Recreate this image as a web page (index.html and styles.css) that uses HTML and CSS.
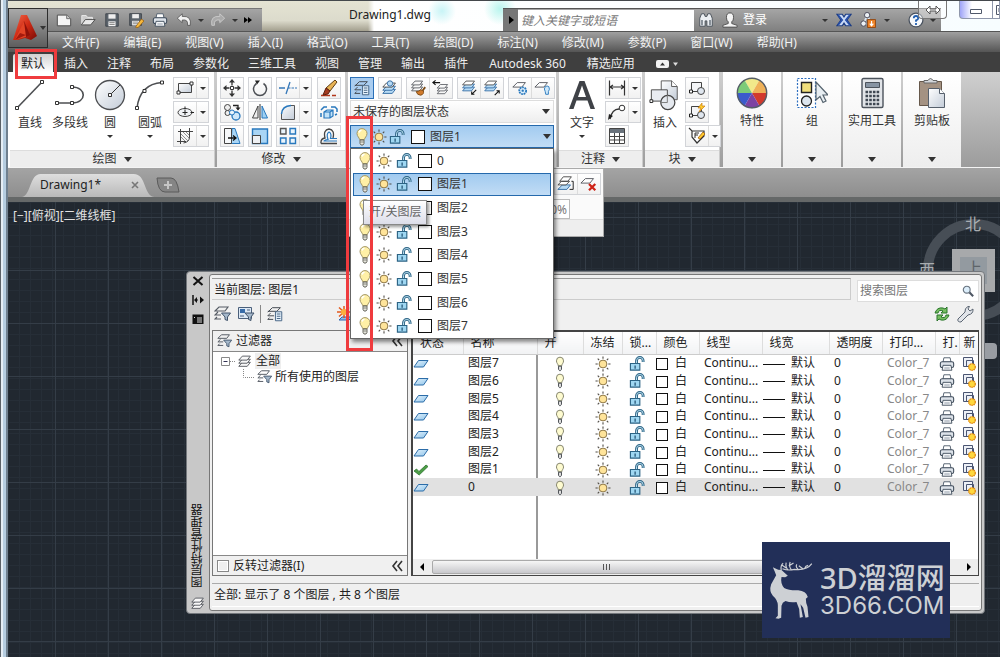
FILE: index.html
```html
<!DOCTYPE html>
<html lang="zh-CN">
<head>
<meta charset="utf-8">
<title>Drawing1.dwg</title>
<link rel="stylesheet" href="styles.css">
</head>
<body>
<svg class="sprites" aria-hidden="true">
  <defs>
    <linearGradient id="g-paper" x1="0" y1="0" x2="1" y2="1"><stop offset="0" stop-color="#fff"/><stop offset="1" stop-color="#c3ccd8"/></linearGradient>
    <linearGradient id="g-sky" x1="0" y1="0" x2="1" y2="1"><stop offset="0" stop-color="#e3f2fc"/><stop offset="1" stop-color="#8fc4ea"/></linearGradient>
    <linearGradient id="g-red" x1="0" y1="0" x2="1" y2="1"><stop offset="0" stop-color="#f4694a"/><stop offset=".5" stop-color="#cf2a14"/><stop offset="1" stop-color="#7a0c06"/></linearGradient>
    <linearGradient id="g-tab" x1="0" y1="0" x2="0" y2="1"><stop offset="0" stop-color="#dedede"/><stop offset="1" stop-color="#b9b9b9"/></linearGradient>
  </defs>
  <symbol id="bulb" viewBox="0 0 14 18"><path d="M4.500 11.500C4.500 9.500 2 8.500 2 5.500a5 4.900 0 0 1 10 0c0 3-2.500 4-2.500 6z" fill="#fff0a6" stroke="#a39767"/><path d="M4 4.500q.5-2 2.500-2.200" stroke="#fff" stroke-width="1.500" fill="none"/><path d="M5 12h4v3.500L8 17H6l-1-1.500z" fill="#e4e4dc" stroke="#6b6b62"/><path d="M5 14h4" stroke="#8a8a80"/></symbol>
  <symbol id="bulb-s" viewBox="0 0 14 18"><path d="M5 11C5 9 3 8 3 5.500a4 4.200 0 0 1 8 0C11 8 9 9 9 11z" fill="#fefbd0" stroke="#77775f"/><path d="M5.300 11.500h3.400V15L7.500 16.500h-1L5.300 15z" fill="#ddd" stroke="#3c4046"/></symbol>
  <symbol id="sun" viewBox="0 0 16 16"><g stroke="#4f4b45" stroke-width="1.100"><path d="M8 .5v2.200M8 13.300v2.200M.5 8h2.200M13.300 8h2.200M2.700 2.700l1.500 1.500M11.800 11.800l1.500 1.500M2.700 13.300l1.500-1.500M11.800 4.200l1.500-1.500"/></g><circle cx="8" cy="8" r="3.900" fill="#ffe49a" stroke="#8d7748"/></symbol>
  <symbol id="lock" viewBox="0 0 17 16"><path d="M8 7V4.500a3.500 3.500 0 0 1 7 0V6" fill="none" stroke="#2c6384" stroke-width="3"/><path d="M8 7V4.500a3.500 3.500 0 0 1 7 0v1.200" fill="none" stroke="#bfe4f5" stroke-width="1"/><path d="M1.500 7.500h10v7h-10z" fill="#9fd7f2" stroke="#2c6384" stroke-width="1.200"/><path d="M6.500 9.500V13" stroke="#1f4f70" stroke-width="1.300"/></symbol>
  <symbol id="plane" viewBox="0 0 16 10"><path d="M5.500 1.500H15L10.500 8H1z" fill="url(#g-sky)" stroke="#2b6ca8"/></symbol>
  <symbol id="stack" viewBox="0 0 18 18"><g fill="#f8f8f8" stroke="#50545a" stroke-width="1"><path d="M2 15l4-4.500h9L11.500 15z"/><path d="M2 11.500L6 7h9l-3.500 4.500z"/><path d="M2 8l4-4.500h9L11.500 8z"/></g></symbol>
  <symbol id="stack-blue" viewBox="0 0 18 18"><g fill="#b7dbf5" stroke="#2d67a0"><path d="M2 15l4-4.500h10L12.500 15z"/><path d="M2 11.500L6 7h10l-3.500 4.500z"/></g><path d="M2 8l4-4.500h10L12.500 8z" fill="#fff" stroke="#444"/></symbol>
  <symbol id="layer-prop" viewBox="0 0 20 18"><g fill="none" stroke="#444a52" stroke-width="1.100"><path d="M8 15H2l2-2M9 11H2l3-3M2 7l5-5h9l-4 4H2"/></g><path d="M10.500 6.500h7v10h-7z" fill="#e4f0fa" stroke="#3c5b7d"/><path d="M12 9h4M12 11.500h4M12 14h4" stroke="#3c5b7d"/></symbol>
  <symbol id="layer-filter" viewBox="0 0 18 16"><g fill="none" stroke="#555b64" stroke-width="1.100"><path d="M7 13H1l2-2M7 9H1l3-3M1 5l4-4h9l-3 4z"/></g><path d="M7.500 7h9l-3 4v3.500l-2.500-1V11z" fill="#a6b9cc" stroke="#40536a"/></symbol>
  <symbol id="layer-cur" viewBox="0 0 20 18"><use href="#stack-blue" width="18" height="18"/><circle cx="10" cy="4" r="3" fill="#b7dbf5" stroke="#2d67a0"/></symbol>
  <symbol id="layer-match" viewBox="0 0 20 18"><g transform="translate(1 -2)"><use href="#stack" width="17" height="17"/></g><path d="M18 8l-3 4" stroke="#7a4a16" stroke-width="2"/><path d="M8 13q1 4 5 4 4-1 3-5l-3-1q-2 2-5 2z" fill="#d07a2c" stroke="#7a4a16"/></symbol>
  <symbol id="layer-prev" viewBox="0 0 20 18"><g transform="translate(4 2)"><use href="#stack" width="16" height="16"/></g><path d="M1 3h8M4 .5L1 3l3 2.500" fill="none" stroke="#111" stroke-width="1.300"/></symbol>
  <symbol id="layer-iso" viewBox="0 0 20 18"><g transform="translate(1 -2)"><use href="#stack-blue" width="17" height="17"/></g><path d="M18 11l-5 5m0-3v3h3" fill="none" stroke="#111" stroke-width="1.200"/></symbol>
  <symbol id="layer-uniso" viewBox="0 0 20 18"><g transform="translate(0 -2)"><use href="#stack-blue" width="17" height="17"/></g><path d="M13 17l5-5m-3 0h3v3" fill="none" stroke="#111" stroke-width="1.200"/></symbol>
  <symbol id="layer-frz" viewBox="0 0 20 18"><path d="M2 8l5-5h9l-4 5z" fill="#fff" stroke="#50545a"/><circle cx="13" cy="12" r="3.800" fill="#dff0fc" stroke="#2878bd" stroke-width="2" stroke-dasharray="2 .8"/><circle cx="13" cy="12" r="1.300" fill="#2878bd"/></symbol>
  <symbol id="layer-off" viewBox="0 0 20 18"><path d="M1 8l5-5h9l-4 5z" fill="#fff" stroke="#50545a"/><path d="M12.500 13q-2-3 0-5.500 2-1.500 4 0 1.500 3-.5 5.500v3h-3z" fill="#cde8fa" stroke="#2878bd"/></symbol>
  <symbol id="layer-del" viewBox="0 0 20 18"><path d="M1 8l5-5h9l-4 5z" fill="#fff" stroke="#50545a"/><path d="M10 9l7 7M17 9l-7 7" stroke="#cf2418" stroke-width="2.500"/></symbol>
  <symbol id="layer-merge" viewBox="0 0 20 18"><path d="M1 15l5-5h9l-4 5z" fill="#b7dbf5" stroke="#2d67a0"/><path d="M1 10l4-4h9l-4 4zM3 6l4-5h9l-4 5z" fill="#fff" stroke="#444"/><path d="M16 6h2v9h-4" fill="none" stroke="#111"/></symbol>
  <symbol id="printer" viewBox="0 0 18 16"><path d="M4.500 6l1-5h7l1 5z" fill="#fff" stroke="#4b5868"/><rect x="1.500" y="5.500" width="15" height="6.500" rx="2" fill="#dce2e9" stroke="#3d4a59" stroke-width="1.200"/><path d="M4.500 9.500h9l1 5.500h-11z" fill="#f4f6f8" stroke="#3d4a59"/><path d="M6 12.500h6" stroke="#8793a1"/></symbol>
  <symbol id="vp" viewBox="0 0 14 16"><path d="M1.500 1.500h9v9h-9zM4.500 4.500h7v6h-7z" fill="#edf0f6" stroke="#4a5572"/><circle cx="10" cy="11" r="3.300" fill="#ffd83e" stroke="#e28a12" stroke-width="1.300" stroke-dasharray="1.500 .6"/></symbol>
  <symbol id="check" viewBox="0 0 16 12"><path d="M1 7l2.500-2L6 7.500 13 1l2 1.500L6.200 11z" fill="#4d9e46" stroke="#2c7430" stroke-width=".8"/></symbol>
  <symbol id="line" viewBox="0 0 32 32"><path d="M3 29L28 3" stroke="#4d4f52" stroke-width="1.600"/><path d="M1.500 27.500h3v3h-3zM26.500 1.500h3v3h-3z" fill="#fff" stroke="#333"/></symbol>
  <symbol id="pline" viewBox="0 0 32 32"><path d="M3 24h15c15 0 15-16 0-16" fill="none" stroke="#4d4f52" stroke-width="1.600"/><path d="M1.500 22.500h3v3h-3zM16.500 22.500h3v3h-3zM16.500 6.500h3v3h-3z" fill="#fff" stroke="#333"/></symbol>
  <symbol id="circle" viewBox="0 0 32 32"><circle cx="16" cy="16" r="14.500" fill="url(#g-paper)" stroke="#4d4f52" stroke-width="1.300"/><path d="M17 15L26 6" stroke="#333"/><path d="M14.500 14.500h3v3h-3z" fill="#fff" stroke="#333"/></symbol>
  <symbol id="arc" viewBox="0 0 32 32"><path d="M3 29Q6 5 28 3.500" fill="none" stroke="#4d4f52" stroke-width="1.600"/><path d="M1.500 27.500h3v3h-3zM26.500 2h3v3h-3zM9 10.500h3v3H9z" fill="#fff" stroke="#333"/></symbol>
  <symbol id="rect" viewBox="0 0 18 18"><path d="M2.500 4.500h13v9h-13z" fill="url(#g-paper)" stroke="#444"/><path d="M1 12h3v3H1zM14 3h3v3h-3z" fill="#fff" stroke="#333"/></symbol>
  <symbol id="ellipse" viewBox="0 0 18 18"><ellipse cx="9" cy="9.500" rx="7" ry="4" fill="#f1f3f6" stroke="#444"/><path d="M9 7v5M6.500 9.500h5M9 3.500v3M14.500 9.500H18" stroke="#222"/></symbol>
  <symbol id="hatch" viewBox="0 0 18 18"><path d="M4.500 2v15M2 4.500h15M13.500 1v9q0 5-6 6M1 14.500h9" fill="none" stroke="#444"/><path d="M5 7l7 7M5 10l4 4M7 5l6 6M10 5l3 3" stroke="#777" stroke-width=".8"/></symbol>
  <symbol id="move" viewBox="0 0 18 18"><path d="M9 2.500v4M9 11.500v4M2.500 9h4M11.500 9h4" stroke="#333" stroke-width="1.300"/><path d="M9 0l3 3.500H6zM9 18l3-3.500H6zM0 9l3.500-3v6zM18 9l-3.500-3v6z" fill="#333"/><path d="M7.500 7.500h3v3h-3z" fill="#fff" stroke="#333"/></symbol>
  <symbol id="rotate" viewBox="0 0 18 18"><path d="M5.500 4.500a6.500 6.500 0 1 0 7 0" fill="none" stroke="#4c4f54" stroke-width="1.500"/><path d="M4 1.500h5l-3 4z" fill="#222"/></symbol>
  <symbol id="trim" viewBox="0 0 18 18"><path d="M0 9h6M11 3L7 15" stroke="#3477b8" stroke-width="1.300"/><path d="M9 9h9" stroke="#3477b8" stroke-dasharray="2.500 1"/></symbol>
  <symbol id="erase" viewBox="0 0 18 18"><path d="M1 16.500h9M12 16.500h4" stroke="#b2361a" stroke-width="1.500"/><path d="M15 1l2 2-7 9-4-3z" fill="#e8b354" stroke="#604014"/><path d="M6 9l4 3-2 3-5 1z" fill="#a43b20" stroke="#5b1d0e"/></symbol>
  <symbol id="copy" viewBox="0 0 18 18"><circle cx="4.500" cy="4.500" r="3" fill="#eee" stroke="#444"/><circle cx="4.500" cy="10" r="2.500" fill="#eee" stroke="#444"/><circle cx="13" cy="13" r="4" fill="#cfe8fa" stroke="#2878bd" stroke-width="1.300"/><circle cx="9" cy="9.500" r="2.500" fill="#eaf5fd" stroke="#2878bd"/><path d="M10 2.500h5v4" fill="none" stroke="#222" stroke-width="1.300"/><path d="M12.500 4.500h5l-2.500 3z" fill="#222"/></symbol>
  <symbol id="mirror" viewBox="0 0 18 18"><path d="M7 3v12H1.500z" fill="#eee" stroke="#444"/><path d="M11 3v12h5.500z" fill="#9fd0f3" stroke="#2878bd"/><path d="M9 1v16" stroke="#333"/></symbol>
  <symbol id="fillet" viewBox="0 0 18 18"><path d="M2 16V11Q3 3 12 2h4v14z" fill="url(#g-paper)"/><path d="M2.500 11Q3 3 12 2.500" fill="none" stroke="#2878bd" stroke-width="1.500"/><path d="M2.500 11v5.500h13v-14H12" fill="none" stroke="#555"/></symbol>
  <symbol id="explode" viewBox="0 0 18 18"><path d="M4 9l3-2h6v6l-3 2H4zM4 9h6v6M10 9l3-2" fill="#c2e2f8" stroke="#2878bd" stroke-width="1.200"/><path d="M1 7l3-3h3M11 4h4l2 2v3M1 10v4M15 12l2-1" fill="none" stroke="#2878bd" stroke-width="1.500"/></symbol>
  <symbol id="stretch" viewBox="0 0 18 18"><path d="M9 1.500h3l5 15H8z" fill="#a9d5f5" stroke="#2878bd"/><path d="M1.500 1.500h7v15h-7z" fill="#f6f8fa" stroke="#444"/><path d="M5 11h8M10 8.500l3 2.500-3 2.500" fill="none" stroke="#111" stroke-width="1.300"/></symbol>
  <symbol id="scale" viewBox="0 0 18 18"><path d="M1.500 2h15v14.500h-15z" fill="#a9d5f5" stroke="#2878bd" stroke-width="1.400"/><path d="M1.500 8.500h8v8h-8z" fill="#eef0f3" stroke="#444"/></symbol>
  <symbol id="array" viewBox="0 0 18 18"><g fill="#e9f4fc" stroke="#2878bd" stroke-width="1.400"><path d="M11 1.500h5.500V7H11zM1.500 11H7v5.500H1.500zM11 11h5.500v5.500H11z"/><path d="M1.500 1.500H7V7H1.500z" stroke="#555"/></g></symbol>
  <symbol id="offset" viewBox="0 0 18 18"><path d="M1 16.500h16M1 16.500q-.5-5 4-5.500-2-8 4-9 6 1 4 9" fill="none" stroke="#444" stroke-width="1.300"/><path d="M3.500 14H17M4 14q1-1.500 4-1.500-2-6 1-7.500 3 1.500 1.500 6.500H17" fill="none" stroke="#2878bd" stroke-width="1.200"/></symbol>
  <symbol id="dim" viewBox="0 0 18 18"><path d="M1.500 1.500v15M16.500 1.500v15M2 8h14M5 6L2 8l3 2M13 6l3 2-3 2" fill="none" stroke="#333" stroke-width="1.200"/></symbol>
  <symbol id="leader" viewBox="0 0 18 18"><path d="M2 16Q4 6 11 6" fill="none" stroke="#333" stroke-width="1.300"/><circle cx="14" cy="5" r="2.800" fill="#fff" stroke="#333"/><path d="M0 17l1-6 4 2z" fill="#222"/></symbol>
  <symbol id="grid" viewBox="0 0 18 18"><path d="M1.500 1.500h15v15h-15z" fill="#fff" stroke="#444"/><path d="M2 2h14v4H2z" fill="#69727c"/><path d="M1.500 9.500h15M1.500 13h15M6.500 6v10.500M11.500 6v10.500" stroke="#444"/></symbol>
  <symbol id="insert" viewBox="0 0 34 34"><path d="M13 2h11l6 6v14H13z" fill="url(#g-paper)" stroke="#555"/><path d="M24 2v6h6" fill="#fff" stroke="#555"/><path d="M2.500 11.500h17v12h-17z" fill="#e9ecf1" stroke="#444"/><circle cx="20" cy="25" r="7.500" fill="#e5e9ef" stroke="#444" stroke-width="1.300"/><path d="M19.500 17v8H12" fill="none" stroke="#777"/><path d="M1 22h3v3H1z" fill="#fff" stroke="#222"/></symbol>
  <symbol id="blk" viewBox="0 0 18 18"><path d="M3.500 3.500h10v9h-10z" fill="#f4f5f7" stroke="#444"/><circle cx="13" cy="12" r="3.500" fill="#dfe6ef" stroke="#444"/><path d="M1.500 11h3v3h-3z" fill="#fff" stroke="#222"/></symbol>
  <symbol id="blk-edit" viewBox="0 0 18 18"><use href="#blk" width="18" height="18"/><path d="M14 0l-4 5h3l-2 4 6-6h-3z" fill="#ffcb2e" stroke="#c77b0d" stroke-width=".7"/></symbol>
  <symbol id="blk-attr" viewBox="0 0 18 18"><path d="M1 1l3 3h12v5l-7 7-5-6V4" fill="#fff" stroke="#333" stroke-width="1.200"/><path d="M7 11V6h4M7 8h3" fill="none" stroke="#333"/><path d="M10 11l5-6 2 2-5 5z" fill="#ffcb2e" stroke="#a35f0b" stroke-width=".8"/></symbol>
  <symbol id="wheel" viewBox="-16 -16 32 32"><path d="M0 0L-7.500-13A15 15 0 0 1 7.500-13z" fill="#f1e98a"/><path d="M0 0L7.500-13A15 15 0 0 1 15 0z" fill="#efb158"/><path d="M0 0H15A15 15 0 0 1 7.500 13z" fill="#d2392d"/><path d="M0 0L7.500 13A15 15 0 0 1-7.500 13z" fill="#7d42a2"/><path d="M0 0L-7.500 13A15 15 0 0 1-15 0z" fill="#3b5bcb"/><path d="M0 0H-15A15 15 0 0 1-7.500-13z" fill="#7ccb78"/><circle r="14.700" fill="none" stroke="#555d68" stroke-width="1.400"/></symbol>
  <symbol id="group" viewBox="0 0 32 32"><path d="M1.500 1.500h18v29h-18z" fill="#fff" stroke="#2d6fc0" stroke-width="1.200" stroke-dasharray="2 1.500"/><path d="M5.500 5.500h10v10h-10z" fill="#f1df7c" stroke="#222" stroke-width="1.400"/><circle cx="10.500" cy="24" r="5" fill="#dde6ef" stroke="#222" stroke-width="1.300"/><path d="M20 5v18l4-3.500 3 6 3-1.500-3-6h5z" fill="#e8eef2" stroke="#55636e" stroke-width="1.200"/></symbol>
  <symbol id="calc" viewBox="0 0 32 32"><rect x="6" y="1.500" width="21" height="29" rx="1.500" fill="#e2e5e9" stroke="#4c535c" stroke-width="1.400"/><path d="M9.500 5.500h14v5h-14z" fill="#8794a3" stroke="#4c535c"/><path d="M9.500 15h14M9.500 19h14M9.500 23h14M9.500 27h14" stroke="#3e4752" stroke-width="2.400" stroke-dasharray="2.600 1.100"/></symbol>
  <symbol id="clip" viewBox="0 0 32 32"><path d="M3.500 4.500h22v24h-22z" fill="#a49282" stroke="#66584b"/><path d="M8 6V3.500h4q2.500-4 5 0h4V6z" fill="#d3d6da" stroke="#666"/><path d="M12.500 11.500h11l5 5v14h-16z" fill="url(#g-paper)" stroke="#56606c"/><path d="M23.500 11.500v5h5" fill="#fff" stroke="#56606c"/></symbol>
  <symbol id="new" viewBox="0 0 18 18"><path d="M1.500 3.500h11l4 4v8h-15z" fill="#f4f4f4" stroke="#444"/><path d="M12 3.500v4h4.500" fill="#ccc" stroke="#666"/></symbol>
  <symbol id="open" viewBox="0 0 18 18"><path d="M2 14V4h5l1.500 2H14v3" fill="#ccc" stroke="#eee"/><path d="M1.500 14.500L6 8.500h11L12 14.500z" fill="#e8e8e8" stroke="#444"/></symbol>
  <symbol id="save" viewBox="0 0 18 18"><path d="M2 2h14v14H2z" fill="#5c646c" stroke="#3b4148"/><path d="M5 2.500h8v5H5z" fill="#eee"/><path d="M5 10.500h8V16H5z" fill="#f5f5f5"/><path d="M6 12h6M6 14h6" stroke="#777"/></symbol>
  <symbol id="saveas" viewBox="0 0 18 18"><use href="#save" width="17" height="17"/><path d="M9 16l6-8 3 2-6 7-3 1z" fill="#f6b83c" stroke="#925c10" stroke-width=".8"/></symbol>
  <symbol id="undo" viewBox="0 0 18 18"><path d="M7 2L1.500 7 7 12V9q7-1 6 6h3Q18 4 7 5z" fill="#f0f0f0" stroke="#444" stroke-width=".8"/></symbol>
  <symbol id="redo" viewBox="0 0 18 18"><path d="M11 2l5.500 5L11 12V9q-7-1-6 6H2Q0 4 11 5z" fill="#aaa" stroke="#d0d0d0" stroke-width=".9"/></symbol>
  <symbol id="logo" viewBox="0 0 24 26"><path d="M0 25L8 0h6l10 21-6 4-6-2-7 2z" fill="url(#g-red)"/><path d="M11 6l6 14-4 2-8 2z" fill="#8f1109"/><path d="M11 6l2 16-11 3z" fill="#e24426"/><path d="M13 20l-6-2-5 7z" fill="#a51a0e"/></symbol>
  <symbol id="binoc" viewBox="0 0 18 18"><path d="M2 7l2-5h3l1 3h2l1-3h3l2 5v9h-6v-6H8v6H2z" fill="#eceff2" stroke="#444c55"/><path d="M4.500 9v6M13.500 9v6" stroke="#59636e" stroke-width="1.500"/></symbol>
  <symbol id="user" viewBox="0 0 18 18"><path d="M5 6q0-5 4-5t4 5q0 4-2 5v2l6 2v2H1v-2l6-2v-2Q5 10 5 6z" fill="#f4f4f4" stroke="#4a4a4a"/></symbol>
  <symbol id="exch" viewBox="0 0 18 18"><path d="M1 2.500h6l2 3 2-3h6l-4.500 6.500 4.500 6.500h-6l-2-3-2 3H1L5.500 9z" fill="#c9d9f5" stroke="#1c3c83" stroke-width="1.300"/><path d="M2.500 3.500L7 9l-4.500 5.500M15.500 3.500L11 9l4.500 5.500" fill="none" stroke="#254da8" stroke-width="1.800"/></symbol>
  <symbol id="share" viewBox="0 0 18 18"><path d="M8 4L4 13M8 4l5 9M4 13h9" stroke="#dce6ee" stroke-width="2"/><circle cx="8" cy="3.500" r="3" fill="#ecf1f5" stroke="#445"/><circle cx="4" cy="13" r="3" fill="#ecf1f5" stroke="#445"/><path d="M8.500 8.500h9v9h-9z" fill="#ee8327" stroke="#8e430c"/><path d="M13 10v5M11 13l2 2.500 2-2.500" fill="none" stroke="#fff" stroke-width="1.300"/></symbol>
  <symbol id="help" viewBox="0 0 18 18"><circle cx="9" cy="9" r="7.800" fill="#f6f8fb" stroke="#48515e" stroke-width="1.400"/><path d="M6.500 7q0-2.500 2.500-2.500T11.500 7q0 1.500-2.500 2.500V11M9 12.500v2" fill="none" stroke="#225fb0" stroke-width="2"/></symbol>
  <symbol id="refresh" viewBox="0 0 18 16"><path d="M2 7q2-6 8-5l2 1 2-2v6H8l2-2Q6 3 5 7zM16 9q-2 6-8 5l-2-1-2 2V9h6l-2 2q4 2 5-2z" fill="#76bd62" stroke="#28752a"/></symbol>
  <symbol id="wrench" viewBox="0 0 18 18"><path d="M2 14l7-7q-.5-4 3-5.500l1.500 0L12 4l2 2 3-2q.5 5-5 6l-7 7q-4 0-3-3z" fill="#e1e4e9" stroke="#5b6572"/></symbol>
  <symbol id="mag" viewBox="0 0 14 14"><path d="M8 8l5 5" stroke="#4d5663" stroke-width="2.500"/><circle cx="5.500" cy="5.500" r="4" fill="#dceefb" stroke="#68737f" stroke-width="1.300"/></symbol>
  <symbol id="vp-filter" viewBox="0 0 18 16"><path d="M1.500 1.500h13v11h-13z" fill="#dce8f5" stroke="#4a5f7a"/><path d="M3 3h5v4H3z" fill="#376ba8"/><path d="M3 10h4M10 4h3" stroke="#4a5f7a"/><path d="M8 7h9l-3 4v3.500l-2.500-1V11z" fill="#a6b9cc" stroke="#40536a"/></symbol>
  <symbol id="newlay" viewBox="0 0 16 16"><path d="M2 14l3-3h10l-3 3z" fill="#8dbdeb" stroke="#2e67b2"/><path d="M7 0v12M2 1.500l10 9M0 6h14M2 10.500l10-9" stroke="#e4581b" stroke-width="1.500"/><circle cx="7" cy="6" r="3" fill="#fbb03c"/></symbol>
</svg>

<div class="window">
  <div class="frame"></div>
  <div class="app">
    <header class="titlebar">
      <button class="appbtn" aria-label="应用程序菜单"><svg class="i24"><use href="#logo"/></svg><span class="caret"></span></button>
      <div class="quick">
        <button aria-label="新建"><svg class="i16"><use href="#new"/></svg></button>
        <button aria-label="打开"><svg class="i16"><use href="#open"/></svg></button>
        <button aria-label="保存"><svg class="i16"><use href="#save"/></svg></button>
        <button aria-label="另存为"><svg class="i16"><use href="#saveas"/></svg></button>
        <button aria-label="打印"><svg class="i16"><use href="#printer"/></svg></button>
        <button aria-label="放弃"><svg class="i16"><use href="#undo"/></svg></button>
        <span class="caret small"></span>
        <button aria-label="重做"><svg class="i16"><use href="#redo"/></svg></button>
        <span class="caret small"></span>
        <button aria-label="更多"><svg class="i8" viewBox="0 0 8 6"><path d="M0 0l4 3-4 3zM4 0l4 3-4 3z"/></svg></button>
      </div>
      <h1 class="doc-title">Drawing1.dwg</h1>
      <div class="info">
        <button class="info-toggle" aria-label="折叠搜索"><svg class="i8" viewBox="0 0 8 8"><path d="M2 0l5 4-5 4z"/></svg></button>
        <input class="info-search" type="text" aria-label="搜索帮助" placeholder="键入关键字或短语">
        <button aria-label="搜索"><svg class="i16"><use href="#binoc"/></svg></button>
        <button class="login"><svg class="i16"><use href="#user"/></svg>登录</button>
        <span class="caret small"></span>
        <button aria-label="Exchange"><svg class="i16"><use href="#exch"/></svg></button>
        <button aria-label="连接"><svg class="i16"><use href="#share"/></svg></button>
        <span class="caret small"></span>
        <button class="help" aria-label="帮助"><svg class="i16"><use href="#help"/></svg></button>
        <span class="caret small"></span>
      </div>
      <div class="winbtns">
        <button class="swap" aria-label="切换"><svg class="i16" viewBox="0 0 16 10"><path d="M1 5l4-4v3h6V1l4 4-4 4V6H5v3z" fill="#fff" stroke="#555"/></svg></button>
        <button class="min" aria-label="最小化"><svg class="i12" viewBox="0 0 12 12"><path d="M.5 5.500h11v4H.5z" fill="#fff" stroke="#50586a"/></svg></button>
        <button class="max" aria-label="最大化"><svg class="i12" viewBox="0 0 12 12"><path d="M3.500 1.500h8v9h-8zM6 4h6v4H6z" fill="#fff" stroke="#50586a"/></svg></button>
      </div>
    </header>

    <nav class="menubar">
      <button>文件(F)</button><button>编辑(E)</button><button>视图(V)</button><button>插入(I)</button><button>格式(O)</button><button>工具(T)</button><button>绘图(D)</button><button>标注(N)</button><button>修改(M)</button><button>参数(P)</button><button>窗口(W)</button><button>帮助(H)</button>
    </nav>

    <nav class="tabs">
      <button class="active">默认</button><button>插入</button><button>注释</button><button>布局</button><button>参数化</button><button>三维工具</button><button>视图</button><button>管理</button><button>输出</button><button>插件</button><button>Autodesk 360</button><button>精选应用</button>
      <button class="fold" aria-label="最小化面板"><svg class="fold-ic" viewBox="0 0 22 8"><rect width="13" height="8" rx="2" fill="#f2f2f2"/><path d="M4 5.500h5L6.500 2.500z" fill="#333"/><path d="M17 2.500h5L19.500 6z" fill="#ddd"/></svg></button>
    </nav>

    <main class="ribbon">
      <section class="panel draw">
        <div class="panel-body">
          <button class="big"><svg class="i32"><use href="#line"/></svg>直线</button>
          <button class="big"><svg class="i32"><use href="#pline"/></svg>多段线</button>
          <button class="big"><svg class="i32"><use href="#circle"/></svg>圆<span class="caret small"></span></button>
          <button class="big"><svg class="i32"><use href="#arc"/></svg>圆弧<span class="caret small"></span></button>
          <div class="col end">
            <div class="split"><button aria-label="矩形"><svg class="i18"><use href="#rect"/></svg></button><button class="dd" aria-label="矩形选项"></button></div>
            <div class="split"><button aria-label="椭圆"><svg class="i18"><use href="#ellipse"/></svg></button><button class="dd" aria-label="椭圆选项"></button></div>
            <div class="split"><button aria-label="图案填充"><svg class="i18"><use href="#hatch"/></svg></button><button class="dd" aria-label="填充选项"></button></div>
          </div>
        </div>
        <footer>绘图<span class="caret"></span></footer>
      </section>

      <section class="panel modify">
        <div class="panel-body">
          <div class="col">
            <div class="split"><button aria-label="移动"><svg class="i18"><use href="#move"/></svg></button></div>
            <div class="split"><button aria-label="复制"><svg class="i18"><use href="#copy"/></svg></button></div>
            <div class="split"><button aria-label="拉伸"><svg class="i18"><use href="#stretch"/></svg></button></div>
          </div>
          <div class="col">
            <div class="split"><button aria-label="旋转"><svg class="i18"><use href="#rotate"/></svg></button></div>
            <div class="split"><button aria-label="镜像"><svg class="i18"><use href="#mirror"/></svg></button></div>
            <div class="split"><button aria-label="缩放"><svg class="i18"><use href="#scale"/></svg></button></div>
          </div>
          <div class="col">
            <div class="split"><button aria-label="修剪"><svg class="i18"><use href="#trim"/></svg></button><button class="dd" aria-label="修剪选项"></button></div>
            <div class="split"><button aria-label="圆角"><svg class="i18"><use href="#fillet"/></svg></button><button class="dd" aria-label="圆角选项"></button></div>
            <div class="split"><button aria-label="阵列"><svg class="i18"><use href="#array"/></svg></button><button class="dd" aria-label="阵列选项"></button></div>
          </div>
          <div class="col">
            <div class="split"><button aria-label="删除"><svg class="i18"><use href="#erase"/></svg></button></div>
            <div class="split"><button aria-label="分解"><svg class="i18"><use href="#explode"/></svg></button></div>
            <div class="split"><button aria-label="偏移"><svg class="i18"><use href="#offset"/></svg></button></div>
          </div>
        </div>
        <footer>修改<span class="caret"></span></footer>
      </section>

      <section class="panel layers">
        <div class="layer-tools">
          <div class="split on"><button aria-label="图层特性"><svg class="i18"><use href="#layer-prop"/></svg></button></div>
          <div class="split"><button aria-label="置为当前"><svg class="i18"><use href="#layer-cur"/></svg></button></div>
          <div class="split"><button aria-label="匹配"><svg class="i18"><use href="#layer-match"/></svg></button><button aria-label="上一个"><svg class="i18"><use href="#layer-prev"/></svg></button></div>
          <div class="split"><button aria-label="隔离"><svg class="i18"><use href="#layer-iso"/></svg></button><button aria-label="取消隔离"><svg class="i18"><use href="#layer-uniso"/></svg></button></div>
          <div class="split"><button aria-label="冻结"><svg class="i18"><use href="#layer-frz"/></svg></button><button aria-label="关闭"><svg class="i18"><use href="#layer-off"/></svg></button></div>
        </div>
        <button class="state-combo"><span>未保存的图层状态</span><span class="caret"></span></button>
        <div class="layer-combo">
          <button class="layer-current"><svg class="bulb"><use href="#bulb"/></svg><svg class="i16"><use href="#sun"/></svg><svg class="i16"><use href="#lock"/></svg><i class="swatch"></i><span class="grow">图层1</span><span class="caret"></span></button>
          <div class="layer-list">
            <button><svg class="bulb"><use href="#bulb"/></svg><svg class="i16"><use href="#sun"/></svg><svg class="i16"><use href="#lock"/></svg><i class="swatch"></i>0</button>
            <button class="hover"><svg class="bulb"><use href="#bulb"/></svg><svg class="i16"><use href="#sun"/></svg><svg class="i16"><use href="#lock"/></svg><i class="swatch"></i>图层1</button>
            <button><svg class="bulb"><use href="#bulb"/></svg><svg class="i16"><use href="#sun"/></svg><svg class="i16"><use href="#lock"/></svg><i class="swatch"></i>图层2</button>
            <button><svg class="bulb"><use href="#bulb"/></svg><svg class="i16"><use href="#sun"/></svg><svg class="i16"><use href="#lock"/></svg><i class="swatch"></i>图层3</button>
            <button><svg class="bulb"><use href="#bulb"/></svg><svg class="i16"><use href="#sun"/></svg><svg class="i16"><use href="#lock"/></svg><i class="swatch"></i>图层4</button>
            <button><svg class="bulb"><use href="#bulb"/></svg><svg class="i16"><use href="#sun"/></svg><svg class="i16"><use href="#lock"/></svg><i class="swatch"></i>图层5</button>
            <button><svg class="bulb"><use href="#bulb"/></svg><svg class="i16"><use href="#sun"/></svg><svg class="i16"><use href="#lock"/></svg><i class="swatch"></i>图层6</button>
            <button><svg class="bulb"><use href="#bulb"/></svg><svg class="i16"><use href="#sun"/></svg><svg class="i16"><use href="#lock"/></svg><i class="swatch"></i>图层7</button>
          </div>
          <div class="tooltip" role="tooltip">开/关图层</div>
        </div>
        <div class="flyout">
          <div class="split"><button aria-label="合并图层"><svg class="i18"><use href="#layer-merge"/></svg></button><button aria-label="删除图层"><svg class="i18"><use href="#layer-del"/></svg></button></div>
          <input type="text" aria-label="锁定图层淡入" value="0%">
          <div class="flyout-foot"></div>
        </div>
      </section>

      <section class="panel annotate">
        <div class="panel-body">
          <button class="big"><svg class="i32" viewBox="0 0 32 32"><path d="M3 30L13.500 2h5L29 30h-4.500l-3-8.500h-11l-3 8.500zM12 18h8L16 6.500z" fill="#3f4247"/></svg>文字<span class="caret small"></span></button>
          <div class="col end">
            <div class="split"><button aria-label="线性"><svg class="i18"><use href="#dim"/></svg></button><button class="dd" aria-label="标注选项"></button></div>
            <div class="split"><button aria-label="引线"><svg class="i18"><use href="#leader"/></svg></button><button class="dd" aria-label="引线选项"></button></div>
            <div class="split"><button aria-label="表格"><svg class="i18"><use href="#grid"/></svg></button></div>
          </div>
        </div>
        <footer>注释<span class="caret"></span></footer>
      </section>

      <section class="panel block">
        <div class="panel-body">
          <button class="big"><svg class="i32"><use href="#insert"/></svg>插入</button>
          <div class="col end">
            <div class="split"><button aria-label="创建"><svg class="i18"><use href="#blk"/></svg></button></div>
            <div class="split"><button aria-label="编辑"><svg class="i18"><use href="#blk-edit"/></svg></button></div>
            <div class="split"><button aria-label="编辑属性"><svg class="i18"><use href="#blk-attr"/></svg></button><button class="dd" aria-label="属性选项"></button></div>
          </div>
        </div>
        <footer>块<span class="caret"></span></footer>
      </section>

      <button class="folded"><svg class="i32"><use href="#wheel"/></svg>特性<span class="caret"></span></button>
      <button class="folded"><svg class="i32"><use href="#group"/></svg>组<span class="caret"></span></button>
      <button class="folded"><svg class="i32"><use href="#calc"/></svg>实用工具<span class="caret"></span></button>
      <button class="folded"><svg class="i32"><use href="#clip"/></svg>剪贴板<span class="caret"></span></button>
    </main>

    <div class="doctabs">
      <button class="doctab">
        <svg class="doctab-bg" viewBox="0 0 144 24" preserveAspectRatio="none"><path d="M0 24C10 22 8 1 20 1H120C134 1 130 22 142 24z" fill="url(#g-tab)"/></svg>
        <span class="doctab-label">Drawing1*</span>
        <svg class="i8" viewBox="0 0 8 8"><path d="M1 1l6 6M7 1L1 7" stroke="#777" stroke-width="1.600"/></svg>
      </button>
      <button class="newtab" aria-label="新图形"><svg class="newtab-ic" viewBox="0 0 24 16"><path d="M1 1h14q6 0 8 14H9Q2 15 1 1z" fill="#858585" stroke="#5b5b5b"/><path d="M12 4v8M8 8h8" stroke="#c5c5c5" stroke-width="2"/></svg></button>
    </div>

    <div class="canvas">
      <div class="viewlabel">[−][俯视][二维线框]</div>
      <div class="viewcube">
        <svg class="cube-ring" viewBox="0 0 104 146"><circle cx="52" cy="54" r="46" fill="none" stroke="#474e56" stroke-width="10"/><path d="M30 33h43v43H30z" fill="#a7a9ab"/><path d="M38 41h27v27H38z" fill="#939aa0"/><rect x="50" y="127" width="25" height="16" rx="4" fill="#999da3"/></svg>
        <span class="north">北</span><span class="west">西</span><span class="top">上</span>
      </div>

      <section class="palette">
        <aside class="palette-bar">
          <button aria-label="关闭"><svg class="i12" viewBox="0 0 12 12"><path d="M1.500 2l9 8M10.500 2l-9 8" stroke="#111" stroke-width="2"/></svg></button>
          <button aria-label="自动隐藏"><svg class="i12" viewBox="0 0 12 12"><path d="M1 1v10" stroke="#111" stroke-width="1.500"/><path d="M2 6l3-3v6zM12 6L8 2.500v7zM4 5.500h2v1H4z" fill="#111"/></svg></button>
          <button aria-label="特性"><svg class="i12" viewBox="0 0 12 12"><path d="M.5 1.500h11v9.500H.5z" fill="#111"/><path d="M5 5h5M5 7h5M5 9h5M2 4.500h1" stroke="#ddd"/></svg></button>
          <h2>图层特性管理器</h2>
          <svg class="i16"><use href="#stack"/></svg>
        </aside>
        <div class="palette-body">
          <div class="current-row">
            <div class="current">当前图层: 图层1</div>
            <label class="search"><input type="text" aria-label="搜索图层" placeholder="搜索图层"><svg class="i12"><use href="#mag"/></svg></label>
          </div>
          <div class="ptools">
            <button aria-label="新建特性过滤器"><svg class="i18"><use href="#layer-filter"/></svg></button>
            <button aria-label="新建组过滤器"><svg class="i18"><use href="#vp-filter"/></svg></button>
            <span class="sep"></span>
            <button aria-label="图层状态管理器"><svg class="i18"><use href="#layer-prop"/></svg></button>
            <button class="newlayer" aria-label="新建图层"><svg class="i16"><use href="#newlay"/></svg></button>
            <span class="grow"></span>
            <button aria-label="刷新"><svg class="i18"><use href="#refresh"/></svg></button>
            <button aria-label="设置"><svg class="i18"><use href="#wrench"/></svg></button>
          </div>
          <div class="panes">
            <div class="filters">
              <div class="filters-head"><svg class="i16"><use href="#layer-filter"/></svg><span class="grow">过滤器</span><svg class="i12" viewBox="0 0 12 12"><path d="M6 1L2 6l4 5M11 1L7 6l4 5" fill="none" stroke="#333" stroke-width="1.600"/></svg></div>
              <ul class="tree">
                <li><svg class="twig" viewBox="0 0 14 16"><path d="M.5 4.500h8v8h-8z" fill="#fff" stroke="#888"/><path d="M2.500 8.500h4" stroke="#335"/><path d="M9 8.500h5" stroke="#888" stroke-dasharray="1 1"/></svg><svg class="i16"><use href="#stack"/></svg><span class="sel">全部</span></li>
                <li class="child"><svg class="twig" viewBox="0 0 14 16"><path d="M2.500 0v8.500H14" fill="none" stroke="#888" stroke-dasharray="1 1"/></svg><svg class="i16"><use href="#layer-filter"/></svg>所有使用的图层</li>
              </ul>
              <div class="filters-foot"><label class="grow"><input type="checkbox">反转过滤器(I)</label><svg class="i12" viewBox="0 0 12 12"><path d="M6 1L2 6l4 5M11 1L7 6l4 5" fill="none" stroke="#333" stroke-width="1.600"/></svg></div>
            </div>
            <div class="grid-pane">
              <div class="grid-area">
                <table>
                  <colgroup><col class="c-state"><col class="c-name"><col class="c-on"><col class="c-frz"><col class="c-lock"><col class="c-color"><col class="c-type"><col class="c-weight"><col class="c-trans"><col class="c-style"><col class="c-plot"><col></colgroup>
                  <thead><tr><th>状态</th><th>名称</th><th>开</th><th>冻结</th><th>锁...</th><th>颜色</th><th>线型</th><th>线宽</th><th>透明度</th><th>打印...</th><th>打.</th><th>新</th></tr></thead>
                  <tbody>
                    <tr><td><svg class="pl"><use href="#plane"/></svg></td><td>图层7</td><td class="mid"><svg class="i16"><use href="#bulb-s"/></svg></td><td class="mid"><svg class="i16"><use href="#sun"/></svg></td><td><svg class="i16"><use href="#lock"/></svg></td><td><i class="swatch"></i>白</td><td>Continu...</td><td><i class="dash"></i>默认</td><td>0</td><td class="dim">Color_7</td><td><svg class="i16"><use href="#printer"/></svg></td><td><svg class="vp"><use href="#vp"/></svg></td></tr>
                    <tr><td><svg class="pl"><use href="#plane"/></svg></td><td>图层6</td><td class="mid"><svg class="i16"><use href="#bulb-s"/></svg></td><td class="mid"><svg class="i16"><use href="#sun"/></svg></td><td><svg class="i16"><use href="#lock"/></svg></td><td><i class="swatch"></i>白</td><td>Continu...</td><td><i class="dash"></i>默认</td><td>0</td><td class="dim">Color_7</td><td><svg class="i16"><use href="#printer"/></svg></td><td><svg class="vp"><use href="#vp"/></svg></td></tr>
                    <tr><td><svg class="pl"><use href="#plane"/></svg></td><td>图层5</td><td class="mid"><svg class="i16"><use href="#bulb-s"/></svg></td><td class="mid"><svg class="i16"><use href="#sun"/></svg></td><td><svg class="i16"><use href="#lock"/></svg></td><td><i class="swatch"></i>白</td><td>Continu...</td><td><i class="dash"></i>默认</td><td>0</td><td class="dim">Color_7</td><td><svg class="i16"><use href="#printer"/></svg></td><td><svg class="vp"><use href="#vp"/></svg></td></tr>
                    <tr><td><svg class="pl"><use href="#plane"/></svg></td><td>图层4</td><td class="mid"><svg class="i16"><use href="#bulb-s"/></svg></td><td class="mid"><svg class="i16"><use href="#sun"/></svg></td><td><svg class="i16"><use href="#lock"/></svg></td><td><i class="swatch"></i>白</td><td>Continu...</td><td><i class="dash"></i>默认</td><td>0</td><td class="dim">Color_7</td><td><svg class="i16"><use href="#printer"/></svg></td><td><svg class="vp"><use href="#vp"/></svg></td></tr>
                    <tr><td><svg class="pl"><use href="#plane"/></svg></td><td>图层3</td><td class="mid"><svg class="i16"><use href="#bulb-s"/></svg></td><td class="mid"><svg class="i16"><use href="#sun"/></svg></td><td><svg class="i16"><use href="#lock"/></svg></td><td><i class="swatch"></i>白</td><td>Continu...</td><td><i class="dash"></i>默认</td><td>0</td><td class="dim">Color_7</td><td><svg class="i16"><use href="#printer"/></svg></td><td><svg class="vp"><use href="#vp"/></svg></td></tr>
                    <tr><td><svg class="pl"><use href="#plane"/></svg></td><td>图层2</td><td class="mid"><svg class="i16"><use href="#bulb-s"/></svg></td><td class="mid"><svg class="i16"><use href="#sun"/></svg></td><td><svg class="i16"><use href="#lock"/></svg></td><td><i class="swatch"></i>白</td><td>Continu...</td><td><i class="dash"></i>默认</td><td>0</td><td class="dim">Color_7</td><td><svg class="i16"><use href="#printer"/></svg></td><td><svg class="vp"><use href="#vp"/></svg></td></tr>
                    <tr><td><svg class="pl"><use href="#check"/></svg></td><td>图层1</td><td class="mid"><svg class="i16"><use href="#bulb-s"/></svg></td><td class="mid"><svg class="i16"><use href="#sun"/></svg></td><td><svg class="i16"><use href="#lock"/></svg></td><td><i class="swatch"></i>白</td><td>Continu...</td><td><i class="dash"></i>默认</td><td>0</td><td class="dim">Color_7</td><td><svg class="i16"><use href="#printer"/></svg></td><td><svg class="vp"><use href="#vp"/></svg></td></tr>
                    <tr class="picked"><td><svg class="pl"><use href="#plane"/></svg></td><td>0</td><td class="mid"><svg class="i16"><use href="#bulb-s"/></svg></td><td class="mid"><svg class="i16"><use href="#sun"/></svg></td><td><svg class="i16"><use href="#lock"/></svg></td><td><i class="swatch"></i>白</td><td>Continu...</td><td><i class="dash"></i>默认</td><td>0</td><td class="dim">Color_7</td><td><svg class="i16"><use href="#printer"/></svg></td><td><svg class="vp"><use href="#vp"/></svg></td></tr>
                  </tbody>
                </table>
              </div>
              <div class="scroll"><svg class="i8" viewBox="0 0 8 8"><path d="M6 0L2 4l4 4z"/></svg><div class="thumb"></div><svg class="i8" viewBox="0 0 8 8"><path d="M2 0l4 4-4 4z"/></svg></div>
            </div>
          </div>
          <div class="status">全部: 显示了 8 个图层 , 共 8 个图层</div>
        </div>
      </section>
    </div>
  </div>

  <div class="mark mark-tab"></div>
  <div class="mark mark-bulbs"></div>
  <div class="brand">
    <svg class="deer" viewBox="200 475 140 180"><path d="M214 497l16 7 10 1 19 17-8 5-11-1Q236 545 248 559q14 8 42 7 24 2 29 20l-6 5q0 14 5 24l3 31-9 2-7-30-8-10 3 16 4 22-9 2-2-26-8-21q-18 3-33-3-10 4-12 14l-1 36-8 3-9-1 7-8 0-32q-1-16-15-28-12-13-5-34l15-27-4-11z" fill="#cdd0d4"/><path d="M239 505q-2-15 6-20M243 501q16 7 36 2 37 4 52-17M260 506q-9-10-6-23M254 499l-12-8M270 505q-9-10-4-24M262 493l14-9M290 503q-9-8-4-15M304 501l-12-9M310 499q2-7 10-8" fill="none" stroke="#cdd0d4" stroke-width="3.500"/></svg>
    <div class="brand-text"><span class="brand-cn">3D溜溜网</span><span class="brand-en">3D66.COM</span></div>
  </div>
</div>
</body>
</html>
```
FILE: styles.css
```css
* { box-sizing: border-box; }
body { margin: 0; background: #212830; color: #333; font: 12px/16px "Noto Sans", "Noto Sans CJK SC", sans-serif; overflow: hidden; }
button, input { font: inherit; color: inherit; margin: 0; }
button { background: none; border: 0; padding: 0; display: flex; align-items: center; }
h1, h2, ul { margin: 0; padding: 0; font-size: 12px; font-weight: 400; list-style: none; }
svg { display: block; flex: none; }
.sprites { position: absolute; width: 0; height: 0; }
.i8 { width: 8px; height: 8px; }
.i12 { width: 12px; height: 12px; }
.i16 { width: 16px; height: 16px; }
.i18 { width: 18px; height: 18px; }
.i24 { width: 24px; height: 26px; }
.i32 { width: 32px; height: 32px; }
.grow { flex: 1; text-align: left; }
.caret { flex: none; width: 0; height: 0; border: 4px solid transparent; border-top: 5px solid #333; border-bottom: 0; }
.caret.small { border-width: 3px; border-top-width: 3px; border-bottom: 0; }

.window { position: relative; display: grid; grid-template-columns: 8px 1fr; min-height: 100vh; }
.frame { background: linear-gradient(90deg, #5b6167 0 1px, #e6eef5 1px 3px, #b6cde0 3px 6px, #70808f 6px); }
.app { display: flex; flex-direction: column; min-width: 0; }

.titlebar { position: relative; z-index: 6; display: flex; align-items: flex-end; height: 31px; border-top: 1px solid #44484c; background:
  radial-gradient(circle at 434px 10px, #c8f4f6, transparent 14px),
  radial-gradient(circle at 492px 8px, #b9f5ee, transparent 16px),
  linear-gradient(90deg, #fff0 360px, #fff 366px, #f7fdff 100%),
  linear-gradient(#e4e3d3, #dcdbcc 65%, #a39f8e); }
.appbtn { align-self: flex-start; margin-top: 7px; width: 40px; height: 40px; flex: none; justify-content: center; gap: 3px; padding-left: 3px; border: 1px solid #2d2d2d; background: linear-gradient(#a9a9a9, #5d5d5d); }
.appbtn .caret { border-width: 3px; border-top-width: 4px; border-bottom: 0; }
.quick { display: flex; align-items: center; height: 23px; width: 214px; gap: 8px; padding-left: 8px; background: linear-gradient(#a5a5a5, #808080); border-top: 1px solid #777; }
.quick .caret { margin: 0 -2px; }
.doc-title { width: 241px; height: 23px; padding-left: 87px; color: #222; line-height: 16px; align-self: flex-start; margin-top: 6px; }
.info { display: flex; align-items: center; width: 438px; height: 23px; background: linear-gradient(#a5a5a5, #808080); border-top: 1px solid #555; gap: 8px; padding-right: 5px; }
.info-toggle { width: 15px; height: 22px; justify-content: center; background: #777; }
.info-search { width: 176px; height: 21px; margin-left: -8px; margin-right: -4px; border: 0; padding: 3px; background: #fff; font-style: italic; }
.info-search::placeholder { color: #777; opacity: 1; }
.login { color: #fff; gap: 5px; white-space: nowrap; }
.login + .caret { margin-left: auto; }
.help { margin-left: 10px; }
.help + .caret { margin-left: -2px; }
.winbtns { position: absolute; top: 0; right: 0; display: flex; align-items: flex-start; }
.swap { width: 29px; height: 18px; justify-content: center; border: 1px solid #777; border-top: 0; border-radius: 0 0 4px 4px; background: #fff6; margin-right: 12px; }
.min, .max { width: 34px; height: 18px; justify-content: center; border: 1px solid #8f97ab; border-top: 0; border-radius: 0 0 0 4px; background: linear-gradient(90deg, #9fa4f8, #fff 12px); }
.max { width: 7px; justify-content: flex-start; border-radius: 0; background: #fff; border-left: 0; overflow: hidden; }

.menubar { display: flex; gap: 24px; height: 21px; padding: 1px 0 0 54px; border-top: 1px solid #555; background: linear-gradient(#a0a0a0, #555); color: #f2f2f2; }
.menubar button { white-space: nowrap; }
.tabs { display: flex; gap: 19px; height: 20px; padding-left: 5px; background: #3f3f3f; color: #eee; }
.tabs button { white-space: nowrap; padding-top: 3px; }
.tabs .active { width: 40px; justify-content: center; color: #222; background: linear-gradient(#d2d2d2, #fff); margin: 2px -8px 0 0; padding-top: 1px; border-radius: 2px 2px 0 0; }
.tabs button:nth-child(n+11) { margin-left: 2px; }
.tabs .fold { margin-left: 10px; }
.fold-ic { width: 22px; height: 8px; }

.ribbon { position: relative; z-index: 5; display: flex; gap: 2px; height: 96px; background: linear-gradient(#cfcfcf, #9c9c9c); border-bottom: 1px solid #f4f4f4; }
.panel { display: flex; flex-direction: column; flex: none; background: #fff; border-right: 1px solid #ccc; }
.draw { width: 207px; padding-left: 2px; }
.modify { width: 129px; }
.layers { width: 209px; }
.annotate { width: 84px; }
.block { width: 75px; }
.panel-body { display: flex; flex: 1; padding-top: 5px; }
.modify .panel-body { padding-left: 3px; gap: 4px; }
.modify .col:nth-child(3) { margin-right: 1px; }
.panel footer { display: flex; justify-content: center; align-items: center; gap: 7px; height: 17px; background: #eee; border-top: 1px solid #ddd; }
.big { flex-direction: column; min-width: 40px; height: 72px; line-height: 16px; padding-top: 2px; }
.big .i32 { margin-bottom: 4px; }
.big .caret { margin-top: 4px; }
.annotate .big { min-width: 46px; }
.col { display: flex; flex-direction: column; gap: 2px; align-items: flex-start; }
.col.end { margin-left: auto; margin-right: 2px; }
.draw .end { margin-right: 5px; }
.block .end { margin-right: 0; }
.split { display: flex; height: 22px; border: 1px solid #d2d4d8; background: linear-gradient(#fff, #f1f1f1); }
.split button { width: 22px; justify-content: center; }
.split button + button { border-left: 1px solid #dcdcdc; width: 23px; }
.split button.dd { width: 12px; }
.dd::before { content: ""; border: 3px solid transparent; border-top-color: #333; border-bottom: 0; }
.split.on { background: #aacdf0; border-color: #2b70b8; }

.layers { position: relative; padding: 5px 2px 0; }
.layer-tools { display: flex; gap: 4px; }
.state-combo { height: 23px; margin-top: 1px; padding: 0 3px 0 2px; justify-content: space-between; border: 1px solid #ddd; background: linear-gradient(#fff, #eee); }
.layer-combo { position: relative; z-index: 2; margin-top: 2px; }
.layer-current { width: 100%; height: 23px; gap: 2px; padding: 0 2px 0 4px; border: 1px solid #2569ac; background: linear-gradient(#a2cbf0, #c1dcf5); }
.bulb { width: 14px; height: 18px; }
.swatch { flex: none; width: 14px; height: 14px; border: 1px solid #111; background: #fff; margin: 0 3px 0 4px; }
.layer-list { position: absolute; top: 23px; left: 0; right: 0; display: flex; flex-direction: column; height: 191px; background: #fff; border: 1px solid #666; box-shadow: 2px 3px 4px #0007; padding: 0 2px; }
.layer-list button { flex: 1; gap: 4px; padding-left: 4px; border: 1px solid transparent; }
.layer-list .swatch { margin-left: 2px; margin-right: 1px; }
.layer-list .hover { border-color: #2569ac; background: linear-gradient(#a2cbf0, #c1dcf5); }
.tooltip { position: absolute; top: 75px; left: 13px; height: 25px; padding: 3px 5px; white-space: nowrap; color: #666; border: 1px solid #888; background: linear-gradient(#fff, #dcdde9); box-shadow: 2px 2px 3px #0006; }
.flyout { position: absolute; top: 96px; left: 0; width: 256px; height: 69px; display: flex; flex-direction: column; align-items: flex-end; background: #fafafa; border: 1px solid #aaa; }
.flyout .split { margin: 4px 2px 4px; }
.flyout input { width: 34px; height: 20px; margin-right: 33px; padding: 0 2px; border: 1px solid #bbb; text-align: right; color: #777; background: #fff; }
.flyout-foot { align-self: stretch; margin-top: auto; height: 17px; background: #eee; border-top: 1px solid #ddd; }

.folded { flex: none; flex-direction: column; width: 58px; height: 95px; padding: 5px 0; background: linear-gradient(#fff, #eee); white-space: nowrap; }
.folded .i32 { margin-bottom: 4px; }
.folded .caret { margin-top: auto; }
.block + .folded { margin-left: 1px; }

.doctabs { display: flex; align-items: center; height: 34px; padding: 0 0 0 14px; background: linear-gradient(#a4a4a4, #8e8e8e); border-bottom: 5px solid #656868; }
.doctab { position: relative; width: 134px; height: 24px; padding: 0 17px 0 18px; justify-content: space-between; color: #222; margin-top: 5px; }
.doctab-bg { position: absolute; inset: 0; width: 100%; height: 100%; }
.doctab-label, .doctab .i8 { position: relative; }
.newtab { margin-top: 4px; }
.newtab-ic { width: 24px; height: 16px; }

.canvas { position: relative; flex: 1; min-height: 455px; overflow: hidden; background:
  linear-gradient(90deg, #343d47 1px, transparent 1px) 47px 0 / 53px 100%,
  linear-gradient(#343d47 1px, transparent 1px) 0 15px / 100% 53px,
  repeating-linear-gradient(90deg, #262e37 0 1px, transparent 1px 11px),
  repeating-linear-gradient(#262e37 0 1px, transparent 1px 11px), #212830; }
.viewlabel { padding: 6px 5px; color: #e2e2e2; }
.viewcube { position: absolute; top: 14px; right: -26px; width: 104px; height: 146px; color: #a9adb1; font-size: 16px; }
.cube-ring { width: 104px; height: 146px; }
.viewcube span { position: absolute; }
.north { left: 43px; top: 0; }
.west { left: -3px; top: 46px; }
.viewcube .top { left: 44px; top: 44px; color: #5d6469; }

.palette { position: absolute; left: 178px; top: 69px; width: 799px; display: grid; grid-template-columns: 22px 1fr; background: #c8c8c8; border: 1px solid #73777c; border-radius: 4px; padding: 2px 2px 2px 0; color: #222; }
.palette-bar { display: flex; flex-direction: column; align-items: center; gap: 7px; padding-top: 1px; }
.palette-bar h2 { margin-top: auto; writing-mode: vertical-rl; transform: rotate(180deg); color: #111; }
.palette-body { min-width: 0; border: 1px solid #777; border-radius: 3px; background: #f0f0f0; padding: 3px 2px; }
.current-row { display: flex; height: 24px; gap: 6px; }
.current { flex: 1; height: 22px; padding: 3px 2px 1px; border: 1px solid #ccc; border-top-color: #999; border-left: 0; }
.search { display: flex; align-items: center; width: 122px; height: 22px; margin-top: 2px; background: #fff; border: 1px solid #ddd; padding-right: 4px; }
.search input { flex: 1; min-width: 0; border: 0; background: none; padding: 0 2px; }
.search input::placeholder { color: #777; opacity: 1; }
.ptools { display: flex; align-items: center; height: 28px; gap: 5px; padding: 0 5px 4px 2px; }
.sep { width: 1px; height: 18px; background: #888; }
.newlayer { margin-left: 48px; }
.panes { display: grid; grid-template-columns: 196px 1fr; gap: 3px; height: 246px; }
.filters { display: flex; flex-direction: column; border: 1px solid #777; background: #fff; }
.filters-head { display: flex; align-items: center; gap: 3px; height: 21px; padding: 0 4px; background: #f0f0f0; border-bottom: 1px solid #888; }
.tree { flex: 1; padding: 1px 8px; }
.tree li { display: flex; align-items: center; height: 16px; gap: 2px; }
.tree .child { padding-left: 20px; }
.twig { width: 14px; height: 16px; }
.sel { background: #eee; padding: 0 1px; }
.filters-foot { display: flex; align-items: center; height: 20px; padding: 0 4px; background: #f0f0f0; border-top: 1px solid #888; }
.filters-foot label { display: flex; align-items: center; gap: 4px; }
.filters-foot input { appearance: none; width: 12px; height: 12px; border: 1px solid #888; background: #eee; box-shadow: inset 0 0 0 1px #fff; }
.grid-pane { min-width: 0; display: flex; flex-direction: column; border: 2px solid #444; border-width: 2px 1px 1px 2px; background: #fff; }
.grid-area { flex: 1; overflow: hidden; background: linear-gradient(#999, #999) 123px 0 / 2px 100% no-repeat; }
table { width: 100%; height: 164px; table-layout: fixed; border-collapse: collapse; }
th, td { padding: 0; font-weight: 400; text-align: left; white-space: nowrap; overflow: hidden; line-height: 16px; }
th { height: 22px; padding-left: 7px; background: linear-gradient(#fff, #f1f2f4); border-right: 1px solid #ddd; border-bottom: 1px solid #ccc; }
th:last-child { padding-left: 4px; border-right: 0; }
td svg, td i { display: inline-block; vertical-align: middle; }
td .swatch { width: 12px; height: 12px; margin: 0 7px 0 0; }
.mid { text-align: center; }
.dim { color: #888; }
td:nth-child(2), td:nth-child(7), td:nth-child(9), td:nth-child(10) { padding-left: 5px; }
.c-state { width: 50px; } .c-name { width: 74px; } .c-on { width: 46px; } .c-frz { width: 39px; } .c-lock { width: 34px; } .c-color { width: 43px; } .c-type { width: 63px; } .c-weight { width: 67px; } .c-trans { width: 53px; } .c-style { width: 53px; } .c-plot { width: 24px; }
td:nth-child(5) { padding-left: 7px; }
td:nth-child(11) { padding-left: 4px; }
td:nth-child(12) { padding-left: 3px; }
.pl { width: 16px; height: 12px; }
.vp { width: 14px; height: 16px; }
.dash { width: 22px; height: 1px; background: #111; margin: 0 6px 0 1px; }
.picked { background: #e1e1e1; }
.scroll { display: flex; align-items: center; gap: 6px; height: 16px; padding: 0 5px; background: #eee; }
.thumb { width: 350px; height: 14px; margin-right: auto; border: 1px solid #aaa; border-radius: 2px; background: repeating-linear-gradient(90deg, #555 0 1px, transparent 1px 3px) 50% 50% / 8px 6px no-repeat, linear-gradient(#f6f6f6, #c8c8cc); }
.status { margin-top: 7px; height: 24px; padding: 3px 2px; border-top: 1px solid #aaa; border-bottom: 1px solid #fff; }

.mark { position: absolute; z-index: 8; border: 3px solid #ef3b3e; pointer-events: none; }
.mark-tab { left: 15px; top: 49px; width: 42px; height: 30px; }
.mark-bulbs { left: 346px; top: 116px; width: 27px; height: 235px; }
.brand { position: absolute; z-index: 9; left: 762px; top: 542px; width: 188px; height: 96px; display: flex; align-items: center; gap: 5px; padding-left: 6px; background: #222f58; color: #cdd0d4; }
.deer { width: 47px; height: 60px; }
.brand-text { display: flex; flex-direction: column; white-space: nowrap; }
.brand-cn { font-size: 29px; line-height: 32px; font-weight: 500; }
.brand-en { font-family: Inter, sans-serif; font-size: 24px; line-height: 24px; }
```
